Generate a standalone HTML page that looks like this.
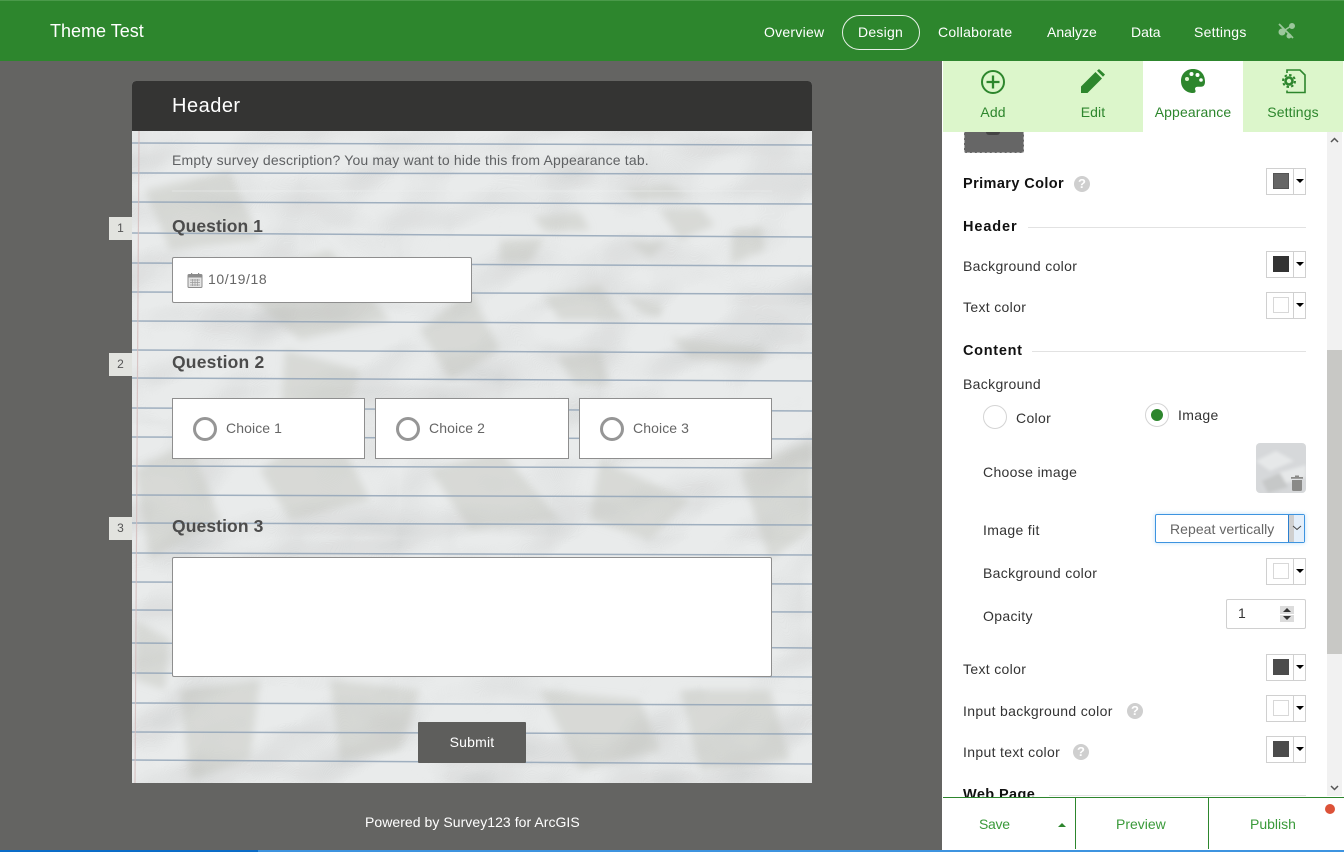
<!DOCTYPE html>
<html><head><meta charset="utf-8"><title>Theme Test</title>
<style>
html,body{margin:0;padding:0;width:1344px;height:852px;overflow:hidden;background:#646462;font-family:"Liberation Sans",sans-serif}
#r{position:relative;width:1344px;height:852px;overflow:hidden}
.a,.t{position:absolute}
.t{white-space:nowrap;line-height:20px;height:20px}
.nav{color:#fff;font-size:14px;top:22px;letter-spacing:.25px}
.tab{font-size:14px;top:102px;color:#2d862d;text-align:center;width:100px;letter-spacing:.1px}
.l{color:#333;font-size:14px;left:963px;letter-spacing:.33px}
.l2{color:#333;font-size:14px;left:983px;letter-spacing:.33px}
.b{color:#111;font-weight:bold;font-size:14.5px;left:963px;letter-spacing:.5px}
.sw{position:absolute;left:1266px;width:38px;height:25px;border:1px solid #d0d0d0;background:#fff}
.sw i{position:absolute;left:6px;top:4px;width:16px;height:16px;display:block;box-sizing:border-box}
.sw b{position:absolute;left:26px;top:0;width:1px;height:25px;background:#d0d0d0}
.sw u{position:absolute;left:29px;top:10px;width:0;height:0;border-left:4px solid transparent;border-right:4px solid transparent;border-top:4px solid #000}
.q{position:absolute;left:109px;width:23px;height:23px;background:#e2e3df;color:#555;font-size:12px;line-height:23px;text-align:center}
.qt{left:172px;color:#4c4c4c;font-weight:bold;font-size:17.5px;letter-spacing:.05px}
.box{position:absolute;background:#fff;border:1px solid #8e8e8e;box-sizing:border-box}
.rad{position:absolute;width:24px;height:24px;border:3.5px solid #969696;border-radius:50%;box-sizing:border-box;background:#fff}
.ch{color:#666;font-size:14px;top:418px;letter-spacing:.1px}
.help{position:absolute;width:16px;height:16px;border-radius:50%;background:#cfcfcf;color:#fff;font-weight:bold;font-size:13px;line-height:16px;text-align:center}
.ft{color:#3a9a3a;font-size:14px;top:814px}
</style></head><body><div id="r">

<div class="a" style="left:0;top:0;width:1344px;height:61px;background:#2d862d;border-top:1px solid #4a9a4a;box-sizing:border-box"></div>
<div class="t" style="left:50px;top:21px;color:#fff;font-size:18px">Theme Test</div>
<div class="t nav" style="left:764px">Overview</div>
<div class="a" style="left:842px;top:15px;width:78px;height:35px;border:1px solid #e6f0e6;border-radius:18px;box-sizing:border-box"></div>
<div class="t nav" style="left:858px">Design</div>
<div class="t nav" style="left:938px">Collaborate</div>
<div class="t nav" style="left:1047px;letter-spacing:0">Analyze</div>
<div class="t nav" style="left:1131px;letter-spacing:0">Data</div>
<div class="t nav" style="left:1194px">Settings</div>
<svg class="a" style="left:1278px;top:22px" width="18" height="18" viewBox="0 0 18 18"><g fill="#9cc79c" stroke="#9cc79c"><line x1="1" y1="2" x2="15" y2="16" stroke-width="1.800"/><line x1="4" y1="10" x2="13" y2="4" stroke-width="1.500"/><circle cx="14" cy="4" r="2.500"/><circle cx="4" cy="10" r="3"/><circle cx="11" cy="14" r="2"/></g></svg>

<div class="a" style="left:132px;top:81px;width:680px;height:702px;background:#e9ebeb;overflow:hidden;border-radius:4px 4px 0 0">
<svg width="680" height="702" viewBox="132 81 680 702" style="position:absolute;left:0;top:0">
<defs>
<filter id="f" x="-10%" y="-10%" width="120%" height="120%"><feGaussianBlur stdDeviation="4"/></filter>
<filter id="p" x="0" y="0" width="100%" height="100%" color-interpolation-filters="sRGB"><feTurbulence type="fractalNoise" baseFrequency=".010 .013" numOctaves="2" seed="7" result="n"/><feDiffuseLighting in="n" surfaceScale="7" diffuseConstant="1.060" lighting-color="#ffffff"><feDistantLight azimuth="235" elevation="68"/></feDiffuseLighting></filter>
</defs>
<rect x="132" y="81" width="680" height="702" filter="url(#p)" style="mix-blend-mode:multiply" opacity=".7"/>
<g filter="url(#f)">
<g fill="#bfc1bb" opacity=".42">
<polygon points="623,190 667,184 690,196 640,200"/><polygon points="660,210 700,208 715,225 680,240"/><polygon points="533,217 580,212 590,230 545,232"/>
<polygon points="500,240 545,238 530,262 500,262"/><polygon points="627,242 667,242 650,258"/><polygon points="733,230 762,226 765,250 730,265"/>
<polygon points="543,297 600,285 625,320 560,320"/><polygon points="627,297 663,305 660,318 640,312"/><polygon points="557,357 600,350 610,385 575,385"/>
<polygon points="670,337 767,350 760,362 690,358"/><polygon points="230,280 330,250 390,320 300,340"/><polygon points="145,190 230,170 260,240 170,250"/>
<polygon points="420,330 470,290 500,350 450,380"/><polygon points="260,470 330,420 370,500 290,520"/><polygon points="430,470 500,450 560,520 470,530"/>
<polygon points="600,460 690,500 650,540 590,520"/><polygon points="135,470 190,440 220,520 150,560"/><polygon points="740,470 812,440 812,530 770,560"/>
<polygon points="180,690 260,680 250,760 190,780"/><polygon points="330,680 420,690 400,750 340,760"/><polygon points="540,690 640,700 660,750 580,770"/>
<polygon points="680,690 770,690 790,760 700,770"/><polygon points="135,620 170,640 165,690 135,680"/><polygon points="285,350 360,370 340,440 280,420"/>
</g>
</g>
<g fill="none" stroke="#93a5b8" stroke-width="1.500" opacity=".85">
<path d="M132 143L812 145"/><path d="M132 173L812 174"/><path d="M132 202L812 204"/><path d="M132 233L812 237"/><path d="M132 263L812 266"/><path d="M132 292L812 294"/><path d="M132 321L812 324"/><path d="M132 350L812 353"/><path d="M132 378L812 381"/><path d="M132 408L812 411"/><path d="M132 437L812 439"/><path d="M132 466L812 468"/><path d="M132 495L812 497"/><path d="M132 523L812 525"/><path d="M132 553L812 555"/><path d="M132 582L812 584"/><path d="M132 610L812 612"/><path d="M132 643L812 648"/><path d="M132 673L812 677"/><path d="M132 703L812 705"/><path d="M132 732L812 734"/><path d="M132 760L812 764"/>
</g>
<line x1="139" y1="131" x2="135" y2="783" stroke="#d4bcbc" stroke-width="1.200" opacity=".8"/>
<line x1="172" y1="191" x2="772" y2="191" stroke="#eef0f0" stroke-width="1" opacity=".5"/>
</svg>
</div>

<div class="a" style="left:132px;top:81px;width:680px;height:50px;background:#343433;border-radius:4px 4px 0 0"></div>
<div class="t" style="left:172px;top:96px;color:#fff;font-size:20px;letter-spacing:.5px">Header</div>
<div class="t" style="left:172px;top:150px;color:#5f6163;font-size:14px;letter-spacing:.17px">Empty survey description? You may want to hide this from Appearance tab.</div>

<div class="q" style="top:217px">1</div>
<div class="t qt" style="top:216px">Question 1</div>
<div class="box" style="left:172px;top:257px;width:300px;height:46px;border-radius:2px"></div>
<svg class="a" style="left:187px;top:272px" width="16" height="16" viewBox="0 0 16 16"><rect x="1" y="2.500" width="14" height="13" rx="1" fill="#e4e4e4" stroke="#8c8c8c"/><rect x="1" y="2.500" width="14" height="3" fill="#8c8c8c"/><rect x="4" y="1" width="1.200" height="3" fill="#8c8c8c"/><rect x="11" y="1" width="1.200" height="3" fill="#8c8c8c"/><path d="M3 8h10M3 10.500h10M3 13h10M5.500 7v7M8 7v7M10.500 7v7" stroke="#9a9a9a" stroke-width=".7"/></svg>
<div class="t" style="left:208px;top:269px;color:#666;font-size:14px;letter-spacing:.6px">10/19/18</div>

<div class="q" style="top:353px">2</div>
<div class="t qt" style="top:352px;letter-spacing:.2px">Question 2</div>
<div class="box" style="left:172px;top:398px;width:193px;height:61px"></div>
<div class="box" style="left:375px;top:398px;width:194px;height:61px"></div>
<div class="box" style="left:579px;top:398px;width:193px;height:61px"></div>
<div class="rad" style="left:193px;top:417px"></div>
<div class="rad" style="left:396px;top:417px"></div>
<div class="rad" style="left:600px;top:417px"></div>
<div class="t ch" style="left:226px">Choice 1</div>
<div class="t ch" style="left:429px">Choice 2</div>
<div class="t ch" style="left:633px">Choice 3</div>

<div class="q" style="top:517px">3</div>
<div class="t qt" style="top:516px;letter-spacing:.1px">Question 3</div>
<div class="box" style="left:172px;top:557px;width:600px;height:120px;border-radius:2px"></div>

<div class="a" style="left:418px;top:722px;width:108px;height:41px;background:#5e5e5c;border-radius:1px"></div>
<div class="t" style="left:418px;width:108px;text-align:center;top:732px;color:#fff;font-size:14px;letter-spacing:.2px">Submit</div>
<div class="t" style="left:365px;top:812px;color:#fff;font-size:14px;letter-spacing:.05px">Powered by Survey123 for ArcGIS</div>

<!-- side panel -->
<div class="a" style="left:942px;top:61px;width:402px;height:791px;background:#fff"></div>
<div class="a" style="left:943px;top:61px;width:200px;height:71px;background:#dcf6cb"></div>
<div class="a" style="left:1243px;top:61px;width:100px;height:71px;background:#dcf6cb"></div>
<svg class="a" style="left:980px;top:69px" width="26" height="26" viewBox="0 0 26 26" fill="none" stroke="#2d862d"><circle cx="13" cy="13" r="11" stroke-width="2"/><path d="M13 6.500v13M6.500 13h13" stroke-width="2.300"/></svg>
<svg class="a" style="left:1081px;top:69px" width="24" height="24" viewBox="0 0 24 24"><path d="M0 24V17.500L14.500 3l6.500 6.500L6.500 24z M16 1.800L18 0l6 5.500-2 2.300z" fill="#2d862d"/></svg>
<svg class="a" style="left:1180px;top:68px" width="26" height="26" viewBox="0 0 26 26"><path d="M13 1C6 1 1 6 1 13s5 12 12 12c2.500 0 3-1.500 2.300-3-.8-1.800.2-3.300 2.200-3.300h3.500c2.800 0 4-2 4-5C25 6 20 1 13 1z" fill="#2d862d"/><circle cx="7" cy="11" r="2" fill="#dff5d0"/><circle cx="11.500" cy="6" r="2" fill="#fff"/><circle cx="17.500" cy="7" r="2" fill="#fff"/><circle cx="21" cy="12" r="1.800" fill="#fff"/></svg>
<svg class="a" style="left:1281px;top:68px" width="26" height="26" viewBox="0 0 26 26" fill="none"><path d="M6 5V2H19l5 5V24.500H6V22.500" stroke="#2d862d" stroke-width="1.600"/><circle cx="8" cy="13" r="3.500" stroke="#2d862d" stroke-width="2.600"/><circle cx="8" cy="13" r="6" stroke="#2d862d" stroke-width="2" stroke-dasharray="2.500 2.200"/></svg>
<div class="t tab" style="left:943px">Add</div>
<div class="t tab" style="left:1043px">Edit</div>
<div class="t tab" style="left:1143px">Appearance</div>
<div class="t tab" style="left:1243px">Settings</div>

<div class="a" style="left:964px;top:132px;width:60px;height:21px;background:#666;border:1px dashed #aaa;border-top:none;box-sizing:border-box;border-radius:0 0 2px 2px"></div>
<div class="a" style="left:986px;top:132px;width:14px;height:3px;background:#444;border-radius:0 0 7px 7px"></div>

<div class="t b" style="top:174px;letter-spacing:.4px">Primary Color</div>
<div class="help" style="left:1074px;top:176px">?</div>
<div class="sw" style="top:168px"><i style="background:#666;border:1px solid #555"></i><b></b><u></u></div>

<div class="t b" style="top:217px;letter-spacing:.9px">Header</div>
<div class="a" style="left:1028px;top:227px;width:278px;height:1px;background:#e2e2e2"></div>
<div class="t l" style="top:256px">Background color</div>
<div class="sw" style="top:251px"><i style="background:#333"></i><b></b><u></u></div>
<div class="t l" style="top:297px">Text color</div>
<div class="sw" style="top:292px"><i style="background:#fff;border:1px solid #d8d8d8"></i><b></b><u></u></div>

<div class="t b" style="top:341px;letter-spacing:.7px">Content</div>
<div class="a" style="left:1032px;top:351px;width:274px;height:1px;background:#e2e2e2"></div>
<div class="t l" style="top:374px">Background</div>
<div class="a" style="left:983px;top:405px;width:24px;height:24px;border:1px solid #d4d4d4;border-radius:50%;box-sizing:border-box"></div>
<div class="t l" style="left:1016px;top:408px">Color</div>
<div class="a" style="left:1145px;top:403px;width:24px;height:24px;border:1px solid #d4d4d4;border-radius:50%;box-sizing:border-box"></div>
<div class="a" style="left:1151px;top:409px;width:12px;height:12px;background:#2d862d;border-radius:50%"></div>
<div class="t l" style="left:1178px;top:405px">Image</div>

<div class="t l2" style="top:462px">Choose image</div>
<svg class="a" style="left:1256px;top:443px" width="50" height="50" viewBox="0 0 50 50"><defs><filter id="g"><feGaussianBlur stdDeviation="1.500"/></filter><clipPath id="c"><rect width="50" height="50" rx="4"/></clipPath></defs><g clip-path="url(#c)"><rect width="50" height="50" fill="#d6d8da"/><g filter="url(#g)"><path d="M0 18L20 8 38 18 14 28zM22 30L50 22V34L30 40z" fill="#e6e8e9"/><path d="M6 38L24 30 32 44 12 50z" fill="#c6c8c8"/></g></g><path d="M35 34h12v1.800H35zM39 32.500h4v2h-4z" fill="#8a8a88"/><path d="M36 37h10v9.500a1.500 1.500 0 0 1-1.500 1.500h-7a1.500 1.500 0 0 1-1.500-1.500z" fill="#8a8a88"/></svg>

<div class="t l2" style="top:520px">Image fit</div>
<div class="a" style="left:1155px;top:514px;width:150px;height:29px;background:#fff;border:1px solid #3d94e0;border-radius:2px;box-sizing:border-box;box-shadow:0 0 5px #bfe0f8"></div>
<div class="a" style="left:1288px;top:515px;width:1px;height:27px;background:#2a7fd0"></div>
<div class="a" style="left:1289px;top:515px;width:5px;height:27px;background:#cfcfcf"></div>
<div class="a" style="left:1294px;top:515px;width:10px;height:27px;background:#e4effa"></div>
<svg class="a" style="left:1292px;top:525px" width="10" height="6" viewBox="0 0 10 6"><path d="M1 1l4 3.500L9 1" fill="none" stroke="#444" stroke-width="1"/></svg>
<div class="t" style="left:1170px;top:519px;color:#666;font-size:14px;letter-spacing:.05px">Repeat vertically</div>

<div class="t l2" style="top:563px">Background color</div>
<div class="sw" style="top:558px"><i style="background:#fff;border:1px solid #d8d8d8"></i><b></b><u></u></div>
<div class="t l2" style="top:606px">Opacity</div>
<div class="a" style="left:1226px;top:599px;width:80px;height:30px;border:1px solid #d0d0d0;border-radius:2px;box-sizing:border-box;background:#fff"></div>
<div class="t" style="left:1238px;top:603px;color:#333;font-size:14px">1</div>
<div class="a" style="left:1280px;top:606px;width:14px;height:16px;background:#dcdcdc"></div>
<div class="a" style="left:1280px;top:613.500px;width:14px;height:1px;background:#fff"></div>
<div class="a" style="left:1283px;top:608px;border-left:4px solid transparent;border-right:4px solid transparent;border-bottom:4px solid #333"></div>
<div class="a" style="left:1283px;top:616px;border-left:4px solid transparent;border-right:4px solid transparent;border-top:4px solid #333"></div>

<div class="t l" style="top:659px">Text color</div>
<div class="sw" style="top:654px"><i style="background:#4c4c4c"></i><b></b><u></u></div>
<div class="t l" style="top:701px">Input background color</div>
<div class="help" style="left:1127px;top:703px">?</div>
<div class="sw" style="top:695px"><i style="background:#fff;border:1px solid #d8d8d8"></i><b></b><u></u></div>
<div class="t l" style="top:742px">Input text color</div>
<div class="help" style="left:1073px;top:744px">?</div>
<div class="sw" style="top:736px"><i style="background:#4c4c4c"></i><b></b><u></u></div>

<div class="t b" style="top:785px;letter-spacing:.4px">Web Page</div>
<div class="a" style="left:1049px;top:795px;width:257px;height:1px;background:#e2e2e2"></div>

<!-- scrollbar -->
<div class="a" style="left:1327px;top:132px;width:15px;height:664px;background:#f1f1f1"></div>
<div class="a" style="left:1327px;top:350px;width:15px;height:304px;background:#c8c8c5"></div>
<svg class="a" style="left:1330px;top:137px" width="9" height="6" viewBox="0 0 9 6"><path d="M1 5l3.500-3.500L8 5" fill="none" stroke="#555" stroke-width="1.500"/></svg>
<svg class="a" style="left:1330px;top:785px" width="9" height="6" viewBox="0 0 9 6"><path d="M1 1l3.500 3.500L8 1" fill="none" stroke="#555" stroke-width="1.500"/></svg>

<!-- footer -->
<div class="a" style="left:943px;top:797px;width:401px;height:53px;background:#fff;border-top:1px solid #2d862d;box-sizing:border-box"></div>
<div class="a" style="left:1075px;top:798px;width:1px;height:51px;background:#2d862d"></div>
<div class="a" style="left:1208px;top:798px;width:1px;height:51px;background:#2d862d"></div>
<div class="t ft" style="left:979px;letter-spacing:-.3px">Save</div>
<div class="a" style="left:1058px;top:823px;border-left:4px solid transparent;border-right:4px solid transparent;border-bottom:4px solid #2d862d"></div>
<div class="t ft" style="left:1116px">Preview</div>
<div class="t ft" style="left:1250px">Publish</div>
<div class="a" style="left:1325px;top:804px;width:10px;height:10px;background:#dc5238;border-radius:50%"></div>

<div class="a" style="left:0;top:850px;width:258px;height:2px;background:#0a6cc8"></div>
<div class="a" style="left:258px;top:850px;width:1086px;height:2px;background:#3d94e0"></div>
</div></body></html>
